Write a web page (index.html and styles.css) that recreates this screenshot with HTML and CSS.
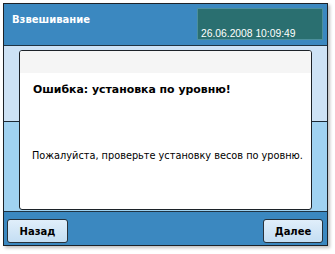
FILE: index.html
```html
<!DOCTYPE html>
<html lang="ru">
<head>
<meta charset="utf-8">
<link rel="stylesheet" href="styles.css">
</head>
<body>
<div class="frame">
  <header class="top">
    <div class="title">Взвешивание</div>
    <div class="clock">26.06.2008 10:09:49</div>
  </header>
  <main class="main">
    <section class="dialog">
      <div class="dialog-band"></div>
      <h1 class="dialog-title">Ошибка: установка по уровню!</h1>
      <p class="dialog-text">Пожалуйста, проверьте установку весов по уровню.</p>
    </section>
  </main>
  <footer class="bottom">
    <button class="btn">Назад</button>
    <button class="btn">Далее</button>
  </footer>
</div>
</body>
</html>
```

FILE: styles.css
```css
html, body {
  margin: 0;
  padding: 0;
  background: #ffffff;
}
body {
  width: 335px;
  height: 254px;
  overflow: hidden;
  font-family: "DejaVu Sans", Verdana, sans-serif;
}
.frame {
  margin: 3px 0 0 3px;
  width: 323px;
  height: 241px;
  border: 1px solid #1c2228;
  box-shadow: 2px 2px 3px rgba(0,0,0,0.25);
  display: flex;
  flex-direction: column;
}
.top {
  height: 41px;
  border-bottom: 1px solid #1f3444;
  background: #3b88c0;
  display: flex;
  justify-content: space-between;
  align-items: flex-start;
}
.title {
  color: #ffffff;
  font-weight: bold;
  font-size: 10px;
  margin: 10px 0 0 8px;
}
.clock {
  margin: 4px 4px 0 0;
  width: 126px;
  height: 32px;
  box-sizing: border-box;
  background: #2a6f70;
  border: 1px solid #4c8f9c;
  color: #ffffff;
  font-family: "Liberation Sans", Arial, sans-serif;
  font-size: 10.3px;
  padding: 19px 0 0 3px;
}
.main {
  height: 166px;
  border-bottom: 1px solid #1f3444;
  background: linear-gradient(to bottom, #cde2f5 0, #cde2f5 75px, #1c2a36 75px, #1c2a36 76px, #a0d2f1 76px, #a0d2f1 100%);
  padding: 4px 15px 0 15px;
  box-sizing: border-box;
}
.dialog {
  height: 160px;
  box-sizing: border-box;
  background: #ffffff;
  border: 1px solid #1c2228;
  border-radius: 3px;
  overflow: hidden;
}
.dialog-band {
  height: 22px;
  background: #f5f5f5;
}
.dialog-title {
  margin: 10px 0 0 13px;
  font-size: 10.9px;
  font-weight: bold;
  color: #000000;
}
.dialog-text {
  margin: 54px 0 0 12px;
  font-size: 9.75px;
  color: #000000;
}
.bottom {
  flex: 1;
  background: #3b88c0;
  display: flex;
  justify-content: space-between;
  align-items: flex-end;
  padding: 0 4px 2px 3px;
}
.btn {
  width: 61px;
  height: 24px;
  border: 1px solid #27313a;
  border-radius: 3px;
  background: linear-gradient(to bottom, #e0eefa, #c4def3);
  font-family: "DejaVu Sans", Verdana, sans-serif;
  font-weight: bold;
  font-size: 10px;
  color: #000000;
  padding: 0;
}
.btn:last-child {
  width: 60px;
}
```
